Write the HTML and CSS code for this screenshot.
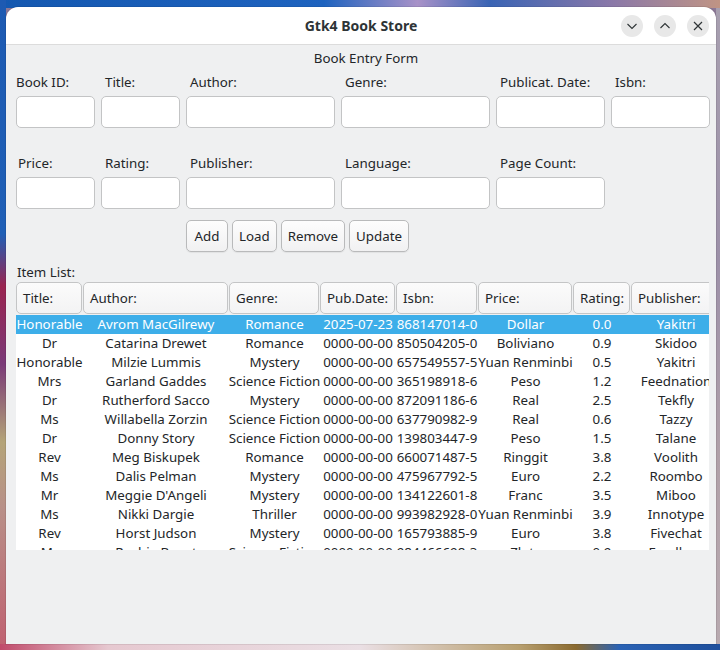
FILE: index.html
```html
<!DOCTYPE html>
<html lang="en">
<head>
<meta charset="utf-8">
<title>Gtk4 Book Store</title>
<link rel="stylesheet" href="styles.css">
</head>
<body>
<div class="desktop">
  <div class="window">
    <header class="titlebar">
      <div class="tb-spacer"></div>
      <div class="title">Gtk4 Book Store</div>
      <div class="controls">
        <button class="wc" aria-label="Minimize"><svg width="12" height="12" viewBox="0 0 12 12"><path d="M1.5 4 L6 8.5 L10.5 4" fill="none" stroke="#2e3436" stroke-width="1.1"/></svg></button>
        <button class="wc" aria-label="Maximize"><svg width="12" height="12" viewBox="0 0 12 12"><path d="M1.5 8 L6 3.5 L10.5 8" fill="none" stroke="#2e3436" stroke-width="1.1"/></svg></button>
        <button class="wc" aria-label="Close"><svg width="12" height="12" viewBox="0 0 12 12"><path d="M2 2 L10 10 M10 2 L2 10" fill="none" stroke="#2e3436" stroke-width="1.2"/></svg></button>
      </div>
    </header>
    <main class="content">
      <div class="form-title">Book Entry Form</div>
      <div class="form-grid">
        <label class="lbl l0">Book ID:</label>
        <label class="lbl">Title:</label>
        <label class="lbl">Author:</label>
        <label class="lbl">Genre:</label>
        <label class="lbl">Publicat. Date:</label>
        <label class="lbl">Isbn:</label>
        <input class="entry" type="text">
        <input class="entry" type="text">
        <input class="entry" type="text">
        <input class="entry" type="text">
        <input class="entry" type="text">
        <input class="entry" type="text">
      </div>
      <div class="form-grid second">
        <label class="lbl l2">Price:</label>
        <label class="lbl">Rating:</label>
        <label class="lbl">Publisher:</label>
        <label class="lbl">Language:</label>
        <label class="lbl">Page Count:</label>
        <span></span>
        <input class="entry" type="text">
        <input class="entry" type="text">
        <input class="entry" type="text">
        <input class="entry" type="text">
        <input class="entry" type="text">
        <span></span>
        <div class="actions">
          <button class="btn">Add</button>
          <button class="btn">Load</button>
          <button class="btn">Remove</button>
          <button class="btn">Update</button>
        </div>
      </div>
      <div class="list-label">Item List:</div>
      <div class="table">
        <div class="thead">
          <button class="th">Title:</button>
          <button class="th">Author:</button>
          <button class="th">Genre:</button>
          <button class="th">Pub.Date:</button>
          <button class="th">Isbn:</button>
          <button class="th">Price:</button>
          <button class="th">Rating:</button>
          <button class="th">Publisher:</button>
        </div>
        <div class="tbody">
          <div class="tr selected"><span>Honorable</span><span>Avrom MacGilrewy</span><span>Romance</span><span>2025-07-23</span><span>868147014-0</span><span>Dollar</span><span>0.0</span><span>Yakitri</span></div>
          <div class="tr"><span>Dr</span><span>Catarina Drewet</span><span>Romance</span><span>0000-00-00</span><span>850504205-0</span><span>Boliviano</span><span>0.9</span><span>Skidoo</span></div>
          <div class="tr"><span>Honorable</span><span>Milzie Lummis</span><span>Mystery</span><span>0000-00-00</span><span>657549557-5</span><span>Yuan Renminbi</span><span>0.5</span><span>Yakitri</span></div>
          <div class="tr"><span>Mrs</span><span>Garland Gaddes</span><span>Science Fiction</span><span>0000-00-00</span><span>365198918-6</span><span>Peso</span><span>1.2</span><span>Feednation</span></div>
          <div class="tr"><span>Dr</span><span>Rutherford Sacco</span><span>Mystery</span><span>0000-00-00</span><span>872091186-6</span><span>Real</span><span>2.5</span><span>Tekfly</span></div>
          <div class="tr"><span>Ms</span><span>Willabella Zorzin</span><span>Science Fiction</span><span>0000-00-00</span><span>637790982-9</span><span>Real</span><span>0.6</span><span>Tazzy</span></div>
          <div class="tr"><span>Dr</span><span>Donny Story</span><span>Science Fiction</span><span>0000-00-00</span><span>139803447-9</span><span>Peso</span><span>1.5</span><span>Talane</span></div>
          <div class="tr"><span>Rev</span><span>Meg Biskupek</span><span>Romance</span><span>0000-00-00</span><span>660071487-5</span><span>Ringgit</span><span>3.8</span><span>Voolith</span></div>
          <div class="tr"><span>Ms</span><span>Dalis Pelman</span><span>Mystery</span><span>0000-00-00</span><span>475967792-5</span><span>Euro</span><span>2.2</span><span>Roombo</span></div>
          <div class="tr"><span>Mr</span><span>Meggie D'Angeli</span><span>Mystery</span><span>0000-00-00</span><span>134122601-8</span><span>Franc</span><span>3.5</span><span>Miboo</span></div>
          <div class="tr"><span>Ms</span><span>Nikki Dargie</span><span>Thriller</span><span>0000-00-00</span><span>993982928-0</span><span>Yuan Renminbi</span><span>3.9</span><span>Innotype</span></div>
          <div class="tr"><span>Rev</span><span>Horst Judson</span><span>Mystery</span><span>0000-00-00</span><span>165793885-9</span><span>Euro</span><span>3.8</span><span>Fivechat</span></div>
          <div class="tr"><span>Mr</span><span>Rochie Bonst</span><span>Science Fiction</span><span>0000-00-00</span><span>984466698-3</span><span>Zloty</span><span>0.9</span><span>Feedbug</span></div>
        </div>
      </div>
    </main>
  </div>
</div>
</body>
</html>
```
FILE: styles.css
```css
html, body {
  margin: 0;
  padding: 0;
}

body {
  width: 720px;
  height: 650px;
  overflow: hidden;
  font-family: "Noto Sans", "DejaVu Sans", sans-serif;
  font-size: 13.33px;
  color: #232629;
  background-color: #8c7896;
  background-image:
    linear-gradient(to right, #c04a6a 0%, #e6c8d0 15%, #eadfe4 50%, #b8a070 72%, #8a6a30 80%, #2a62b4 86%, #1e4f9c 100%),
    linear-gradient(to bottom, #1d5ab2 0%, #1f5fb6 36%, #9a2450 44%, #7a3a78 56%, #b4a478 68%, #b89088 78%, #c06070 100%),
    linear-gradient(to right, #1458b0 0%, #1e63bf 45%, #a892c8 58%, #3a64b4 68%, #8a78a8 85%, #c09484 100%),
    linear-gradient(to bottom, #a8a0b0 0%, #9c90a8 40%, #b0a0a8 70%, #b8aab0 100%);
  background-size: 720px 6px, 6px 650px, 720px 8px, 4px 650px;
  background-position: 0 644px, 0 0, 0 0, 716px 0;
  background-repeat: no-repeat;
}

.desktop {
  box-sizing: border-box;
  height: 650px;
  padding: 7px 4px 6px 6px;
}

.window {
  height: 637px;
  display: flex;
  flex-direction: column;
  border-radius: 12px 12px 0 0;
  overflow: hidden;
  box-shadow: 0 0 0 1px rgba(0, 0, 0, 0.08);
}

.titlebar {
  flex: 0 0 37px;
  display: grid;
  grid-template-columns: 1fr auto 1fr;
  align-items: center;
  background: #ffffff;
  border-bottom: 1px solid #dcdcdc;
}

.title {
  font-weight: bold;
  font-size: 14px;
  color: #2e3436;
}

.controls {
  display: flex;
  justify-content: flex-end;
  gap: 11px;
  padding-right: 7px;
}

.wc {
  width: 22px;
  height: 22px;
  border: none;
  border-radius: 50%;
  background: #e8e8e8;
  padding: 0;
  display: flex;
  align-items: center;
  justify-content: center;
}

.content {
  flex: 1;
  background: #eff0f1;
  padding: 4px 6px 0 10px;
}

.form-title {
  text-align: center;
  line-height: 18px;
  height: 18px;
  padding-left: 6px;
}

.form-grid {
  display: grid;
  grid-template-columns: 79px 79px 149px 149px 109px 99px;
  grid-template-rows: 18px 32px;
  column-gap: 6px;
  row-gap: 5px;
  margin-top: 6px;
}

.form-grid.second {
  margin-top: 26px;
  grid-template-rows: 18px 32px 32px;
}

.lbl {
  line-height: 18px;
  padding-left: 4px;
  white-space: nowrap;
}

.lbl.l0 {
  padding-left: 0;
}

.lbl.l2 {
  padding-left: 2px;
}

.entry {
  box-sizing: border-box;
  height: 32px;
  width: 100%;
  margin: 0;
  border: 1px solid #c3c4c5;
  border-radius: 5px;
  background: #ffffff;
  font: inherit;
  padding: 0 6px;
}

.actions {
  grid-column: 3 / 7;
  display: flex;
  gap: 4px;
  margin-top: 6px;
}

.btn {
  box-sizing: border-box;
  height: 32px;
  min-width: 42px;
  padding: 0 6px;
  border: 1px solid #b9babb;
  border-radius: 5px;
  background: linear-gradient(#fdfdfd, #f1f1f2);
  box-shadow: 0 1px 1px rgba(0, 0, 0, 0.06);
  font: inherit;
  color: #232629;
}

.list-label {
  margin-top: 17px;
  line-height: 18px;
  padding-left: 1px;
}

.table {
  margin-top: 1px;
  width: 693px;
}

.thead,
.tr {
  display: grid;
  grid-template-columns: 67px 146px 91px 76px 82px 95px 58px 90px;
}

.thead {
  height: 32px;
  overflow: hidden;
}

.th {
  box-sizing: border-box;
  height: 32px;
  width: calc(100% - 1px);
  margin: 0;
  padding: 0 0 0 6px;
  text-align: left;
  border: 1px solid #c4c5c6;
  border-radius: 5px;
  background: linear-gradient(#fbfbfb, #f3f3f4);
  font: inherit;
  color: #232629;
  white-space: nowrap;
  overflow: hidden;
}

.tbody {
  margin-top: 1px;
  height: 235px;
  overflow: hidden;
  background: #ffffff;
}

.tr {
  height: 19px;
  line-height: 19px;
}

.tr span {
  display: flex;
  justify-content: center;
  white-space: nowrap;
  overflow: visible;
}

.tr.selected {
  background: #3daee9;
  color: #ffffff;
}
```
